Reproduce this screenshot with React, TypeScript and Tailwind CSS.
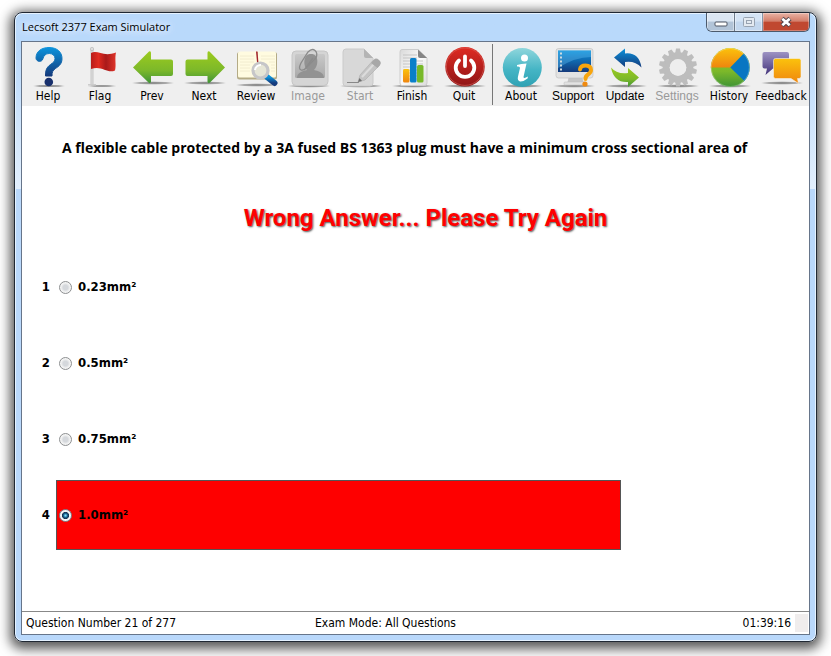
import { useState } from 'react'
import type { ReactNode } from 'react'

type Tool = {
  label: string
  icon: ReactNode
  disabled?: boolean
  plain?: boolean
}

const Shadow = ({ y = 42 }: { y?: number }) => (
  <ellipse cx="27" cy={y} rx="22" ry="1.800" fill="url(#shade)" />
)

function Gradients() {
  return (
    <svg className="absolute h-0 w-0" aria-hidden="true">
      <defs>
        <radialGradient id="shade">
          <stop offset="0" stopColor="#777" />
          <stop offset=".65" stopColor="#999" stopOpacity=".8" />
          <stop offset="1" stopColor="#aaa" stopOpacity="0" />
        </radialGradient>
        <linearGradient id="blue" x2="0" y2="1">
          <stop stopColor="#0c93dc" />
          <stop offset="1" stopColor="#143a7c" />
        </linearGradient>
        <linearGradient id="green" x2="0" y2="1">
          <stop stopColor="#9ccb1e" />
          <stop offset=".6" stopColor="#7cb82a" />
          <stop offset="1" stopColor="#3f9436" />
        </linearGradient>
        <linearGradient id="orange" x2="0" y2="1">
          <stop stopColor="#fbc20c" />
          <stop offset="1" stopColor="#ef850f" />
        </linearGradient>
        <linearGradient id="red" x2="0" y2="1">
          <stop stopColor="#df2b22" />
          <stop offset="1" stopColor="#8f1517" />
        </linearGradient>
        <linearGradient id="flagRed">
          <stop stopColor="#b81c1a" />
          <stop offset=".3" stopColor="#e02a20" />
          <stop offset=".6" stopColor="#a91a1a" />
          <stop offset="1" stopColor="#e0352a" />
        </linearGradient>
        <linearGradient id="teal" x2="0" y2="1">
          <stop stopColor="#8fd6dc" />
          <stop offset=".55" stopColor="#45b5c5" />
          <stop offset="1" stopColor="#2fa2b4" />
        </linearGradient>
        <linearGradient id="purple" x2="0" y2="1">
          <stop stopColor="#9d93c3" />
          <stop offset="1" stopColor="#43337a" />
        </linearGradient>
        <linearGradient id="gray" x2="0" y2="1">
          <stop stopColor="#c9c9c9" />
          <stop offset="1" stopColor="#a9a9a9" />
        </linearGradient>
        <linearGradient id="paper" x2="1" y2="1">
          <stop stopColor="#d9d9d9" />
          <stop offset=".5" stopColor="#fafafa" />
          <stop offset="1" stopColor="#dcdcdc" />
        </linearGradient>
      </defs>
    </svg>
  )
}

const toothAngles = Array.from({ length: 14 }, (_, i) => (i * 360) / 14)

const mainTools: Tool[] = [
  {
    label: 'Help',
    icon: (
      <>
        <ellipse cx="27" cy="42" rx="17" ry="1.500" fill="url(#shade)" />
        <path
          d="M14 14C14 7 20 3.500 27 3.500C35 3.500 40 8 40 14.500C40 20 37 22 33.500 24.500C30.500 26.700 30 28 30 32H23.500C23.500 26 24.500 23.500 28.500 20.500C31.500 18.500 33 17 33 14.500C33 11.500 30.500 9.500 27.300 9.500C23.500 9.500 21.800 11.500 20.800 15C20 18.500 14 18 14 14Z"
          fill="url(#blue)"
          stroke="url(#blue)"
          strokeLinejoin="round"
        />
        <circle cx="26.800" cy="38" r="4.300" fill="#18306c" />
      </>
    ),
  },
  {
    label: 'Flag',
    icon: (
      <>
        <ellipse cx="28" cy="42" rx="16" ry="1.200" fill="url(#shade)" />
        <path d="M17 5h2v36h-2z" fill="#e4e4e4" stroke="#aaa" strokeWidth=".6" />
        <circle cx="18" cy="5" r="1.700" fill="#ddd" stroke="#aaa" strokeWidth=".5" />
        <path d="M14 40h8v1.500h-8z" fill="#ccc" />
        <path d="M17 9C24 5.500 29 13.500 42 8.500C40.500 15 42.500 21 41 26.500C33 30 28 21 17 25Z" fill="url(#flagRed)" />
      </>
    ),
  },
  {
    label: 'Prev',
    icon: (
      <>
        <Shadow y={39} />
        <path
          d="M7 23.500L23 7.500Q25 6.500 25 9V15.500H45Q47 15.500 47 17.500V30Q47 32 45 32H25V38Q24 40 22.500 38.500Z"
          fill="url(#green)"
        />
      </>
    ),
  },
  {
    label: 'Next',
    icon: (
      <>
        <Shadow y={39} />
        <path
          d="M47 23.500L31.500 7.500Q29.500 6.500 29.500 9V15.500H9.500Q7.500 15.500 7.500 17.500V30Q7.500 32 9.500 32H29.500V38Q30.500 40 32 38.500Z"
          fill="url(#green)"
        />
      </>
    ),
  },
  {
    label: 'Review',
    icon: (
      <>
        <Shadow y={41} />
        <rect x="7" y="8" width="40" height="27.500" rx="2.500" fill="#b4ab86" />
        <rect x="8" y="7.500" width="38" height="26" rx="1.500" fill="#fffbe0" />
        <path
          d="M10 12h14M10 15h14M10 18h14M10 21h10M10 24h10M10 27h10M31 12h14M31 15h14M39 18h6M41 21h4M41 24h4M41 27h4"
          stroke="#efeacb"
          strokeWidth=".8"
        />
        <path d="M27.500 8v26" stroke="#d5cda4" />
        <path d="M26 7.500h1.500l1 12-1.500-1.500z" fill="#a3222b" />
        <path d="M37 33L44.500 39" stroke="url(#blue)" strokeWidth="6" strokeLinecap="round" />
        <circle cx="30.500" cy="26.500" r="7.500" fill="#e6e6d6" stroke="#c6c6c8" strokeWidth="3.200" />
        <path d="M25 26a5.500 5.500 0 0 1 6-5" fill="none" stroke="#fff" strokeWidth="2" />
      </>
    ),
  },
  {
    label: 'Image',
    disabled: true,
    icon: (
      <>
        <Shadow />
        <rect x="10" y="7" width="36" height="34.500" rx="4" fill="#d5d5d5" stroke="#c6c6c6" />
        <rect x="13" y="10" width="30" height="24" rx="1.500" fill="url(#gray)" />
        <path
          d="M15 34C15 29 20 27 25 26C21 21 21 10 29 10C37 10 37 21 32 26C37 27 42 29 42 34Z"
          fill="#929292"
        />
        <path
          d="M22 26L34 14Q36 9 33 6.500Q30 4 26 8L19 19Q16 25 19 26Q22 27 25 22L31 14"
          fill="none"
          stroke="#8b8b8b"
          strokeWidth="1.300"
        />
      </>
    ),
  },
  {
    label: 'Start',
    disabled: true,
    icon: (
      <>
        <Shadow />
        <path d="M12 5H30L39 14V39Q39 42 36 42H12Q9 42 9 39V8Q9 5 12 5Z" fill="#d8d8d8" stroke="#cacaca" />
        <path d="M30 5L39 14H32Q30 14 30 12Z" fill="#b4b4b4" />
        <path d="M13 38.500h12" stroke="#888" strokeWidth="1" />
        <path d="M24 38L26 31L39 16.500L45.500 21.500L31 36Z" fill="#c4c4c4" stroke="#b0b0b0" strokeWidth=".7" />
        <path d="M28 33L41 19" stroke="#dcdcdc" strokeWidth="2" />
        <path d="M37 19L40 15.500Q42 13.500 45 16Q48 18.500 46 21L43.500 24Z" fill="#a8a8a8" />
        <path d="M24 38L25.500 34L28 37Z" fill="#707070" />
      </>
    ),
  },
  {
    label: 'Finish',
    icon: (
      <>
        <Shadow />
        <path d="M16 5.500H32L41 14V39Q41 41.500 38.500 41.500H16Q14 41.500 14 39V8Q14 5.500 16 5.500Z" fill="url(#paper)" stroke="#ccc" />
        <path d="M17 11h14M17 14h14M17 17h20M17 20h20M17 23h20M17 26h20M17 29h20M17 32h20M17 35h20" stroke="#bbb" strokeWidth=".8" />
        <path d="M32 5.500L41 14H34Q32 14 32 12Z" fill="#858585" />
        <rect x="17" y="25" width="6.500" height="13.500" rx="1.500" fill="url(#orange)" />
        <rect x="24" y="14" width="6.500" height="24.500" rx="1.500" fill="#087fc9" />
        <rect x="31" y="21" width="6.500" height="17.500" rx="1.500" fill="#78b929" />
      </>
    ),
  },
  {
    label: 'Quit',
    icon: (
      <>
        <Shadow />
        <circle cx="27" cy="22.700" r="19.700" fill="url(#red)" />
        <circle cx="27" cy="22.700" r="18.700" fill="none" stroke="#d9655c" strokeWidth=".6" />
        <path d="M21 16.500A9.300 9.300 0 1 0 33 16.500" fill="none" stroke="#fff" strokeWidth="3.800" strokeLinecap="round" />
        <path d="M27 12.500V22" stroke="#fff" strokeWidth="3.800" strokeLinecap="round" />
      </>
    ),
  },
]

const infoTools: Tool[] = [
  {
    label: 'About',
    icon: (
      <>
        <Shadow />
        <circle cx="27.300" cy="23.500" r="19.500" fill="url(#teal)" />
        <circle cx="29.500" cy="14" r="3.500" fill="#fff" />
        <path
          d="M22 21Q26 19.500 31.500 19.500L28.500 33Q28.500 35 33 32.500L32.500 34.500Q28 38 25 37.500Q22 36.500 23 32.500L25 24Q25.200 22 22 22.500Z"
          fill="#fff"
        />
      </>
    ),
  },
  {
    label: 'Support',
    plain: true,
    icon: (
      <>
        <Shadow />
        <path d="M22 32h13l2 8H20z" fill="#c6c6c6" />
        <rect x="17" y="38" width="21" height="3" rx="1" fill="#e2e2e2" stroke="#bbb" strokeWidth=".5" />
        <rect x="9" y="4.500" width="37" height="29.500" rx="2.500" fill="#e3e3e3" stroke="#bcbcbc" strokeWidth=".6" />
        <rect x="11" y="6.500" width="33" height="21.500" fill="url(#blue)" />
        <path d="M11 6.500H44V13Q28 13 11 24Z" fill="#5fb8ee" opacity=".4" />
        <path d="M13 8.500h2v2h-2zM13 12.500h2v2h-2zM13 16.500h2v2h-2zM13 20.500h2v2h-2zM13 24.500h2v2h-2z" fill="#cfdbe0" />
        <path
          d="M33 25.500Q33.500 21.500 38.500 21.500Q44 21.500 44 26Q44 28.500 41 30.500Q38.500 32 38.500 35"
          fill="none"
          stroke="#f7a50e"
          strokeWidth="4"
          strokeLinecap="round"
        />
        <circle cx="38" cy="40" r="2.600" fill="#ef8a10" />
      </>
    ),
  },
  {
    label: 'Update',
    plain: true,
    icon: (
      <>
        <Shadow />
        <path d="M15 13.500L26 4.500V9.500Q40 8 42.500 23.500Q36 16.500 26 18V23Z" fill="url(#blue)" />
        <path d="M40 33.500L29 24V29Q18 30.500 12 23.500Q15 39 29 38V43Z" fill="url(#green)" />
      </>
    ),
  },
  {
    label: 'Settings',
    disabled: true,
    plain: true,
    icon: (
      <>
        <Shadow />
        <circle cx="27" cy="23.500" r="11.800" fill="none" stroke="#bdbdbd" strokeWidth="7" />
        {toothAngles.map((angle) => (
          <path key={angle} d="M24 10L25 4.500H29L30 10Z" fill="#bdbdbd" transform={`rotate(${angle} 27 23.500)`} />
        ))}
        <circle cx="27" cy="23.500" r="8.300" fill="#eee" />
      </>
    ),
  },
  {
    label: 'History',
    icon: (
      <>
        <Shadow />
        <circle cx="27.300" cy="23.500" r="19.500" fill="url(#green)" />
        <path d="M27.300 23.500H7.800A19.500 19.500 0 0 1 40.800 9.500Z" fill="url(#orange)" />
        <path d="M27.300 23.500L40.800 9.500A19.500 19.500 0 0 1 41.300 37Z" fill="#0876c2" />
        <circle cx="27.300" cy="23.500" r="19" fill="none" stroke="#fff" strokeOpacity=".25" />
      </>
    ),
  },
  {
    label: 'Feedback',
    icon: (
      <>
        <Shadow y={39} />
        <path d="M9.500 8H32Q34 8 34 10V22.500Q34 24.500 32 24.500H18L10.500 31L12 24.500H9.500Q7.500 24.500 7.500 22.500V10Q7.500 8 9.500 8Z" fill="url(#purple)" />
        <path
          d="M20.500 14.500H44Q46 14.500 46 16.500V32.500Q46 34.500 44 34.500H42.500L43.500 39.500L36 34.500H20.500Q18.500 34.500 18.500 32.500V16.500Q18.500 14.500 20.500 14.500Z"
          fill="url(#orange)"
          stroke="#f4f0e8"
          strokeWidth=".6"
        />
      </>
    ),
  },
]

function ToolButton({ label, icon, disabled, plain }: Tool) {
  return (
    <button
      type="button"
      disabled={disabled}
      className={`flex w-13 shrink-0 flex-col items-center text-black disabled:text-[#999] ${
        plain ? "font-['Liberation_Sans',sans-serif]" : "font-['DejaVu_Sans_Condensed','DejaVu_Sans',sans-serif]"
      }`}
    >
      <svg viewBox="0 0 52 46" className="h-[46px] w-13" aria-hidden="true">
        {icon}
      </svg>
      <span className="text-xs leading-3">{label}</span>
    </button>
  )
}

function TitleBar() {
  return (
    <header className="flex h-7 shrink-0 items-start justify-between pl-px">
      <h1 className="pt-1.5 font-['Open_Sans',sans-serif] text-[11px] leading-4 text-black [text-shadow:0_0_8px_white,0_0_8px_white]">
        Lecsoft 2377 Exam Simulator
      </h1>
      <div className="flex h-[19px] overflow-hidden rounded-b-md border border-t-0 border-[#4c5a6c]">
        <button
          type="button"
          aria-label="Minimize"
          className="flex w-7 items-center justify-center border-r border-[#6d7b8c] bg-linear-to-b from-[#dbe6f3] from-45% to-[#b2c4d8] to-50% inset-ring inset-ring-white/40"
        >
          <svg viewBox="0 0 14 6" className="mt-1 h-1.5 w-3.5">
            <rect x="1" y="1" width="12" height="4" rx="1" fill="#fff" stroke="#4e5562" />
          </svg>
        </button>
        <button
          type="button"
          aria-label="Maximize"
          disabled
          className="flex w-7 items-center justify-center border-r border-[#8796a8] bg-linear-to-b from-[#d5e4f5] from-45% to-[#c3d7ee] to-50% inset-ring inset-ring-white/40"
        >
          <svg viewBox="0 0 12 10" className="h-2.5 w-3" fill="#e4eaf1" stroke="#98a3b1">
            <rect x=".5" y=".5" width="11" height="9" rx="1" />
            <rect x="3.500" y="3.500" width="5" height="3" />
          </svg>
        </button>
        <button
          type="button"
          aria-label="Close"
          className="flex w-[46px] items-center justify-center bg-linear-to-b from-[#e9b3a5] via-[#d37f6b] via-45% to-[#c04830] to-52% inset-ring inset-ring-white/30"
        >
          <svg viewBox="0 0 14 12" className="h-3 w-3.5">
            <path d="M3 2.500L11 9.500M11 2.500L3 9.500" stroke="#50444a" strokeWidth="4.600" />
            <path d="M3.300 2.800L10.700 9.200M10.700 2.800L3.300 9.200" stroke="#fff" strokeWidth="2.800" />
          </svg>
        </button>
      </div>
    </header>
  )
}

const answers = ['0.23mm²', '0.5mm²', '0.75mm²', '1.0mm²']

export default function App() {
  const [selected, setSelected] = useState(3)

  return (
    <div className="flex min-h-screen flex-col bg-white px-3.5 pt-3 pb-3.5 font-['DejaVu_Sans_Condensed','DejaVu_Sans',sans-serif] text-black">
      <Gradients />
      <div className="flex flex-1 flex-col rounded-lg border border-[#202833] bg-linear-to-b from-[#b9d9fb] from-5% via-[#e2effd] via-28% to-[#b9d8fb] to-28% px-1.5 pb-1.5 shadow-[0_3px_12px_4px_rgba(0,0,0,0.65)] inset-ring inset-ring-[#e5f2ff]">
        <TitleBar />
        <main className="flex flex-1 flex-col border border-[#66758a] bg-white">
          <nav aria-label="Exam tools" className="flex h-16 shrink-0 items-start overflow-hidden bg-[#efefef] pt-0.5">
            {mainTools.map((tool) => (
              <ToolButton key={tool.label} {...tool} />
            ))}
            <div className="mx-0.5 h-[61px] w-px shrink-0 bg-[#777]" />
            {infoTools.map((tool) => (
              <ToolButton key={tool.label} {...tool} />
            ))}
          </nav>

          <section className="flex-1 px-4">
            <h2 className="pt-8 pl-6 font-['Open_Sans',sans-serif] text-sm leading-5 font-bold">
              A flexible cable protected by a 3A fused BS 1363 plug must have a minimum cross sectional area of
            </h2>
            <p
              role="status"
              className="pt-11 pl-5 text-center font-['Roboto',sans-serif] text-2xl font-bold text-[#fe0000] [text-shadow:1px_1px_2px_#555]"
            >
              Wrong Answer... Please Try Again
            </p>
            <fieldset aria-label="Answers" className="mt-[18px] flex flex-col gap-1.5">
              {answers.map((answer, i) => (
                <div key={answer} className="flex h-[70px] items-center text-[13px] font-bold">
                  <span className="w-[18px] pr-1.5 text-right">{i + 1}</span>
                  <label
                    className={`flex h-full w-[565px] items-center gap-1.5 border pl-0.5 ${
                      selected === i ? 'border-[#555] bg-[#fe0000]' : 'border-transparent'
                    }`}
                  >
                    <input
                      type="radio"
                      name="answer"
                      checked={selected === i}
                      onChange={() => setSelected(i)}
                      className="size-[13px] appearance-none rounded-full border border-[#8d8f91] bg-[radial-gradient(circle,#d5d8dc_30%,#f4f4f4_60%)] checked:border-[#7c8790] checked:bg-[radial-gradient(circle,#7fdcf5_5%,#17638f_25%,#12314d_42%,#f4f4f4_50%)]"
                    />
                    {answer}
                  </label>
                </div>
              ))}
            </fieldset>
          </section>

          <footer className="flex h-[23px] shrink-0 items-center border-t border-[#888] pr-px pl-1 text-xs leading-4">
            <span className="w-[289px]">Question Number 21 of 277</span>
            <span className="flex-1">Exam Mode: All Questions</span>
            <span>01:39:16</span>
            <span className="ml-1 h-[18px] w-[13px] bg-[#f0eded]" />
          </footer>
        </main>
      </div>
    </div>
  )
}
